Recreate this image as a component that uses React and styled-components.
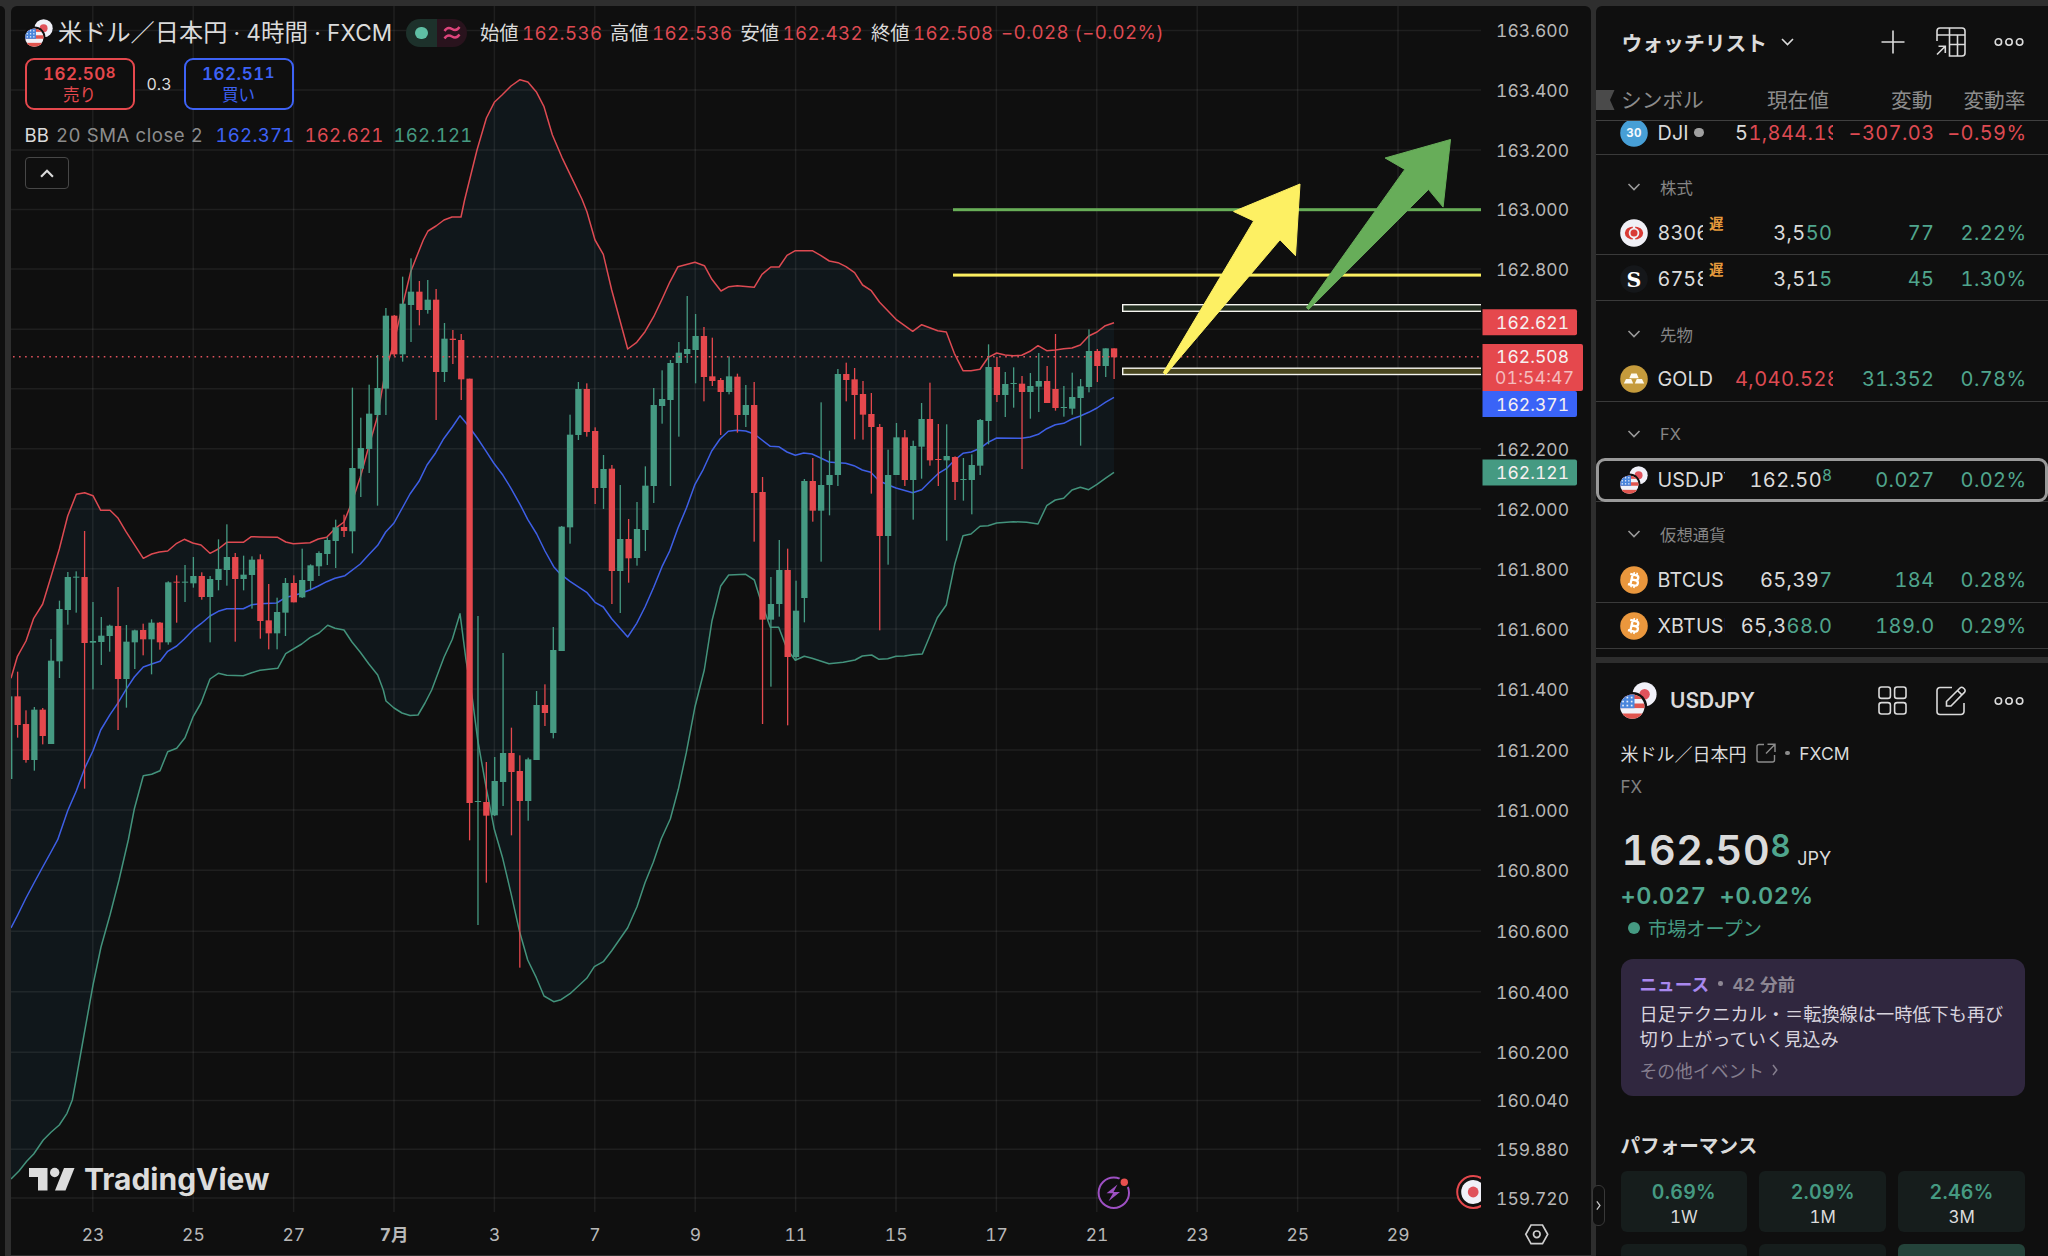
import React from 'react';
import styled, { createGlobalStyle, css } from 'styled-components';

const c = {
  frame: '#2e2e2e',
  panel: '#0f0f0f',
  text: '#dbdbdb',
  muted: '#8c8c8c',
  axis: '#b8b8b8',
  line: '#333333',
  red: '#e5484d',
  redText: '#dd4a52',
  green: '#459a82',
  greenText: '#4fa58d',
  blue: '#3d62f5',
};

const Global = createGlobalStyle`
  *, *::before, *::after { box-sizing: border-box; }
  html, body { margin: 0; padding: 0; background: ${c.frame}; }
  body {
    width: 2048px;
    height: 1256px;
    overflow: hidden;
    font-family: Inter, 'Noto Sans CJK JP', sans-serif;
    font-variant-numeric: tabular-nums;
    color: ${c.text};
  }
`;

/* ---------- chart data ---------- */

const STEP = 8.37;
const ORIGIN = 93;

// Each row: colour, high, body top, body bottom, low (thirds of a pixel below `base`).
const candleBlocks = [
  { first: -10, base: 1320, rows: [
    ['g', 769, 769, 1017, 1017], ['r', 695, 769, 855, 893], ['r', 811, 852, 960, 968], ['g', 801, 809, 960, 992],
    ['r', 804, 809, 888, 913], ['g', 597, 662, 912, 912], ['g', 482, 507, 664, 714], ['g', 396, 411, 510, 554],
    ['g', 394, 410, 413, 518], ['r', 273, 411, 609, 1046], ['g', 486, 603, 608, 748], ['g', 531, 587, 606, 675],
    ['g', 554, 557, 588, 635], ['r', 441, 558, 717, 870], ['g', 555, 605, 717, 803], ['g', 569, 571, 607, 687],
    ['r', 551, 570, 598, 646], ['g', 538, 548, 598, 703], ['r', 546, 548, 607, 629], ['g', 424, 427, 607, 614],
    ['r', 406, 425, 428, 548], ['g', 375, 425, 428, 486], ['g', 351, 408, 430, 443], ['r', 397, 408, 471, 479],
    ['g', 408, 417, 471, 607], ['g', 298, 387, 420, 451], ['g', 253, 351, 390, 437], ['r', 339, 351, 417, 605],
    ['g', 347, 404, 417, 451], ['g', 349, 359, 405, 506], ['r', 343, 358, 543, 596], ['r', 432, 541, 580, 628],
    ['g', 473, 516, 580, 628], ['g', 414, 429, 518, 588], ['r', 406, 429, 487, 487], ['g', 326, 420, 472, 474],
    ['g', 373, 376, 423, 448], ['g', 334, 339, 379, 408], ['g', 292, 300, 342, 375], ['g', 239, 262, 303, 384],
    ['r', 224, 261, 273, 291],
  ] },
  { first: 31, base: 720, rows: [
    ['g', 443, 684, 874, 940], ['g', 533, 624, 686, 771], ['g', 434, 521, 627, 699], ['g', 345, 444, 525, 797],
    ['g', 204, 227, 446, 525], ['r', 225, 227, 343, 348], ['g', 110, 191, 343, 365], ['g', 55, 155, 195, 306],
    ['r', 123, 155, 210, 256], ['g', 120, 179, 210, 221], ['r', 147, 179, 396, 540], ['g', 249, 296, 396, 426],
    ['r', 270, 296, 300, 372], ['r', 282, 300, 418, 480], ['r', 416, 416, 1689, 1801],
  ] },
  { first: 46, base: 1740, rows: [
    ['g', 108, 663, 666, 1035], ['r', 546, 666, 707, 908], ['g', 531, 603, 706, 708], ['g', 219, 519, 606, 678],
    ['r', 443, 519, 576, 766], ['r', 526, 573, 663, 1163], ['g', 533, 538, 663, 722], ['g', 333, 375, 540, 540],
    ['r', 313, 375, 399, 438], ['g', 141, 210, 459, 475],
  ] },
  { first: 56, base: 720, rows: [
    ['g', 858, 860, 1233, 1233], ['g', 524, 584, 862, 911], ['g', 426, 447, 585, 600], ['r', 430, 447, 576, 590],
    ['r', 562, 573, 744, 792], ['g', 645, 687, 744, 807], ['r', 675, 686, 993, 1092], ['g', 735, 897, 993, 1119],
    ['r', 837, 897, 955, 1028], ['g', 786, 867, 954, 977], ['g', 679, 737, 870, 933], ['g', 444, 495, 738, 789],
    ['g', 391, 477, 498, 551], ['g', 360, 369, 480, 738],
  ] },
  { first: 70, base: 840, rows: [
    ['g', 186, 218, 249, 470], ['g', 48, 207, 222, 249], ['g', 102, 168, 210, 310], ['r', 141, 168, 291, 364],
    ['r', 173, 289, 303, 318], ['r', 294, 300, 336, 465], ['g', 229, 289, 336, 343], ['r', 281, 290, 405, 458],
    ['g', 315, 375, 405, 441], ['r', 306, 375, 639, 785], ['r', 591, 636, 1019, 1332], ['g', 891, 972, 1019, 1220],
    ['g', 780, 870, 972, 1010], ['r', 806, 870, 1131, 1336], ['g', 902, 992, 1131, 1140], ['g', 597, 603, 954, 1027],
    ['r', 534, 603, 692, 725], ['g', 367, 615, 692, 845], ['g', 512, 585, 615, 706], ['g', 267, 282, 585, 618],
    ['r', 248, 282, 300, 364], ['r', 264, 298, 345, 478], ['r', 303, 342, 404, 479], ['r', 339, 402, 441, 641],
    ['r', 432, 441, 768, 1051], ['g', 509, 585, 768, 854], ['g', 429, 472, 585, 585], ['r', 450, 472, 600, 618],
    ['g', 482, 498, 600, 719], ['g', 369, 417, 500, 596], ['r', 308, 417, 541, 557], ['r', 432, 537, 540, 618],
    ['g', 433, 528, 541, 782], ['r', 529, 531, 606, 660], ['g', 534, 597, 600, 662], ['g', 523, 555, 600, 703],
    ['g', 417, 420, 557, 585], ['g', 193, 261, 423, 493], ['r', 231, 261, 345, 366], ['g', 276, 312, 345, 411],
    ['g', 262, 309, 312, 383], ['r', 288, 311, 336, 567], ['g', 279, 318, 336, 416], ['g', 219, 303, 320, 396],
    ['r', 258, 303, 369, 369], ['r', 162, 327, 384, 392], ['g', 318, 381, 384, 410], ['g', 278, 351, 386, 404],
    ['g', 297, 319, 354, 497], ['g', 148, 213, 321, 337], ['r', 207, 213, 258, 306], ['g', 205, 205, 258, 291],
    ['r', 205, 205, 232, 297],
  ] },
];

const candles = candleBlocks.flatMap(({ first, base, rows }) =>
  rows.map(([kind, ...v], i) => ({
    kind,
    x: ORIGIN + (first + i) * STEP,
    v: v.map((n) => (n + base) / 3),
  })),
);

// A stretch of a band line: offset in pixels, divisor per unit, flat list of x,y pairs.
const stretch = (dx, dy, unit, list) => {
  const out = [];
  for (let i = 0; i < list.length; i += 2) out.push([dx + list[i] / unit, dy + list[i + 1] / unit]);
  return out;
};

const upper = [
  ...stretch(0, 440, 3, [33, 715, 52, 650, 78, 603, 101, 535, 128, 492, 153, 410, 178, 327, 203, 228, 229, 163, 254, 158,
    279, 167, 302, 211, 330, 211, 353, 233, 378, 275, 430, 355, 455, 342, 478, 336, 503, 333, 530, 310, 553, 298, 578, 309,
    603, 315, 630, 340, 655, 327, 680, 307, 730, 307, 754, 290, 780, 291, 833, 292, 857, 306, 880, 311, 930, 308, 955, 297,
    980, 292, 1005, 266, 1032, 246]),
  ...stretch(330, 240, 3, [66, 786, 91, 712, 116, 620, 141, 535, 166, 395, 191, 310, 217, 200, 242, 95, 267, 32, 280, 0]),
  ...stretch(0, 0, 1, [428, 231, 436, 226, 444, 220, 452, 217, 461, 217, 464.6, 200, 477, 150, 486.4, 118, 494.3, 102.3,
    502, 95, 511, 86, 520, 79.7, 527.9, 82, 536.6, 92.3, 544, 106.7, 552.4, 135, 561.9, 157.3, 572, 178.3, 582, 199.3,
    587, 212, 595, 240, 603.3, 254.3, 611.7, 290, 627.7, 349, 636.7, 342.3, 645, 331.7, 653.7, 316.7, 662, 299.3,
    669.7, 282.3, 678, 266.7, 694.9, 262.3, 704.4, 265.7, 711.9, 279.3, 721, 291, 728.9, 286.7, 737.2, 285.7, 754.2, 287.3,
    762, 274.3, 770.8, 267, 779.1, 267, 787, 255.3, 795.3, 250.7, 812.3, 250.7, 820.6, 255.3, 829.3, 261, 838, 262.7,
    846, 266.7, 854.6, 272.7, 862.6, 285, 871.3, 290.7, 879.6, 302.3]),
  ...stretch(660, 280, 3, [708, 118, 758, 154, 785, 134, 833, 152, 859, 156, 883, 220, 909, 272, 933, 272, 960, 268,
    985, 232, 1010, 219, 1035, 225, 1060, 227, 1085, 226, 1110, 214, 1134, 197, 1160, 212, 1186, 210, 1211, 206, 1236, 204,
    1261, 195, 1286, 168, 1311, 156, 1336, 137, 1362, 128]),
];

const basis = [
  ...stretch(0, 0, 1, [11, 928, 17.7, 915, 26, 898, 34, 883, 42.7, 867, 51, 852]),
  ...stretch(0, 440, 3, [173, 1199, 203, 1112, 229, 1053, 254, 985, 279, 932, 302, 870, 330, 824, 353, 790, 380, 745,
    403, 711, 430, 681, 455, 672, 480, 664, 503, 634, 530, 618, 553, 597, 580, 569, 603, 551, 630, 528, 655, 514, 680, 506,
    730, 506, 755, 494, 780, 491, 830, 489, 857, 472, 880, 467, 905, 459, 930, 450, 955, 438, 980, 425, 1005, 415]),
  ...stretch(330, 240, 3, [45, 1007, 91, 972, 116, 944, 143, 916, 167, 876, 192, 849, 217, 804, 240, 762, 267, 724,
    291, 675, 317, 638, 341, 596, 367, 561, 390, 527, 413, 555, 442, 594, 467, 632, 491, 669, 519, 706, 543, 745, 570, 793,
    593, 838, 620, 882, 645, 933, 671, 980, 690, 1001, 720, 1024, 770, 1057, 795, 1087, 820, 1101, 845, 1136, 893, 1191,
    920, 1150, 945, 1101, 971, 1042, 996, 980, 1019, 933]),
  ...stretch(660, 280, 3, [54, 744, 80, 682, 105, 613, 130, 568, 155, 513, 180, 477, 205, 454, 230, 451, 257, 453,
    283, 462, 306, 480, 331, 499, 356, 500, 381, 516, 406, 526, 431, 519, 456, 522, 482, 534, 507, 546, 532, 548, 557, 550,
    582, 557, 607, 570, 632, 577, 657, 602, 683, 614, 708, 624, 758, 638, 785, 629, 809, 605, 834, 581, 859, 566, 884, 540,
    909, 520, 934, 516, 960, 505, 984, 487, 1010, 474, 1085, 475, 1110, 471, 1135, 463, 1160, 446, 1186, 434, 1211, 430,
    1236, 417, 1261, 408, 1286, 397, 1311, 384, 1336, 367, 1362, 352]),
];

const lower = [
  ...stretch(0, 1100, 3, [33, 237, 57, 213, 80, 184, 101, 162, 130, 120, 153, 97, 178, 75, 201, 40, 217, 0]),
  ...stretch(0, 0, 1, [76, 1080, 84, 1035, 93, 985, 101, 947, 110, 915, 119, 880]),
  ...stretch(0, 440, 3, [385, 1200, 403, 1107, 430, 1007, 455, 1003, 480, 992, 503, 935, 530, 925, 555, 893, 580, 829,
    603, 789, 630, 717, 655, 700, 680, 706, 730, 707, 755, 698, 780, 691, 833, 685, 857, 641, 905, 612, 930, 593, 957, 579,
    983, 556, 1005, 565, 1032, 570]),
  ...stretch(330, 240, 3, [66, 1206, 91, 1237, 116, 1271, 143, 1305, 160, 1350]),
  ...stretch(0, 0, 1, [386, 701, 394, 708, 402, 713, 410, 715.5, 418, 715, 425, 703, 431.7, 690]),
  ...stretch(330, 240, 3, [342, 1252, 367, 1198, 390, 1121]),
  ...stretch(440, 580, 3, [78, 240, 97, 355, 113, 480, 138, 620, 163, 748, 188, 835, 213, 940, 238, 1052, 263, 1140,
    289, 1193, 312, 1248, 341, 1265, 363, 1259, 390, 1241, 440, 1195, 463, 1160, 490, 1145, 515, 1112, 563, 1043, 591, 980,
    615, 908, 640, 847, 664, 776, 691, 717, 715, 628, 739, 518, 765, 380, 793, 270]),
  ...stretch(660, 280, 3, [156, 1022, 182, 918, 206, 885, 257, 883, 283, 900, 300, 955, 331, 1042, 356, 1042, 381, 1107,
    406, 1141, 433, 1129, 456, 1135, 507, 1151, 550, 1147, 585, 1140, 607, 1128, 635, 1125, 657, 1138, 683, 1136, 708, 1129,
    733, 1128, 758, 1124, 787, 1122, 809, 1069, 832, 1013, 859, 975, 884, 853, 909, 767, 933, 762, 960, 739, 984, 737,
    1010, 729, 1060, 725, 1100, 727, 1134, 732, 1160, 677, 1186, 660, 1211, 655, 1236, 630, 1261, 622, 1286, 629, 1311, 613,
    1336, 595, 1362, 577]),
];

const toPoints = (list) => list.map(([x, y]) => `${x.toFixed(1)},${y.toFixed(1)}`).join(' ');

const priceTicks = [
  ['163.600', 30.5], ['163.400', 90], ['163.200', 150], ['163.000', 209.5], ['162.800', 269], ['', 329.3], ['', 388.7],
  ['162.200', 448.7], ['162.000', 509], ['161.800', 568.7], ['161.600', 629], ['161.400', 689], ['161.200', 750],
  ['161.000', 810], ['160.800', 870.3], ['160.600', 931.3], ['160.400', 991.7], ['160.200', 1052.3], ['160.040', 1100.5],
  ['159.880', 1149.3], ['159.720', 1198],
];
const timeTicks = ['23', '25', '27', '7月', '3', '7', '9', '11', '15', '17', '21', '23', '25', '29'];

/* ---------- layout ---------- */

const Shell = styled.div`
  display: grid;
  grid-template-columns: 5px 1580px 452px;
  column-gap: 5.5px;
  width: 2048px;
  height: 1256px;
  padding-top: 6px;
  overflow: hidden;
  background: ${c.frame};
`;

const ToolEdge = styled.div`
  background: ${c.panel};
  border-top-right-radius: 6px;
`;

const ChartPanel = styled.main`
  position: relative;
  height: 1249px;
  margin-left: 0.5px;
  background: ${c.panel};
  border-radius: 6px 6px 0 0;
  overflow: hidden;
`;

const ChartSvg = styled.svg`
  display: block;
  width: 1580px;
  height: 1249px;
`;

const AxisText = styled.text`
  font-family: Inter, 'Noto Sans CJK JP', sans-serif;
  font-size: 17.5px;
  font-weight: ${(p) => (p.$bold ? 700 : 400)};
  fill: ${(p) => p.$fill || c.axis};
`;

const LogoText = styled.text`
  font-family: Inter, sans-serif;
  font-size: 30px;
  font-weight: 700;
  fill: #dcdcdc;
`;

const Legend = styled.div`
  position: absolute;
  left: 13.5px;
  top: 12px;
  display: flex;
  flex-direction: column;
  align-items: flex-start;
`;

const LegendRow = styled.div`
  display: flex;
  align-items: center;
  height: ${(p) => p.$h}px;
  margin-bottom: ${(p) => p.$mb || 0}px;
  white-space: pre;
`;

const PairTitle = styled.span`
  margin-left: 5.5px;
  width: 337px;
  font-size: 22.6px;
  line-height: 30px;
  letter-spacing: 0.1px;
`;

const Cjk = styled.span`
  font-size: ${(p) => p.$size}px;
  letter-spacing: 0;
`;

const StatusPill = styled.span`
  display: flex;
  width: 61px;
  height: 28px;
  margin: 0 13px 0 11px;
  border-radius: 14px;
  overflow: hidden;
`;

const PillHalf = styled.span`
  flex: 1;
  display: flex;
  align-items: center;
  justify-content: center;
  background: ${(p) => p.$bg};
`;

const Dot = styled.span`
  flex: none;
  width: ${(p) => p.$size}px;
  height: ${(p) => p.$size}px;
  border-radius: 50%;
  background: ${(p) => p.$color};
`;

const Ohlc = styled.span`
  width: ${(p) => p.$w}px;
  font-size: 18.7px;
  line-height: 28px;
  letter-spacing: 0.4px;
  color: ${c.redText};
`;

const OhlcLabel = styled.span`
  display: inline-block;
  width: 42px;
  font-size: 19.3px;
  letter-spacing: 0;
  color: ${c.text};
`;

const TradeButton = styled.button`
  display: flex;
  flex-direction: column;
  align-items: center;
  justify-content: center;
  width: 110px;
  height: 52px;
  padding: 1px 0 0;
  border: 2px solid ${(p) => p.$color};
  border-radius: 9px;
  background: ${c.panel};
  color: ${(p) => p.$color};
  font: 600 17px/21px Inter, 'Noto Sans CJK JP', sans-serif;
  font-variant-numeric: tabular-nums;
`;

const TradePrice = styled.span`
  letter-spacing: 0.5px;
`;

const TradeLabel = styled.span`
  font-size: 16.5px;
  line-height: 20px;
  font-weight: 400;
`;

const Sup = styled.span`
  position: relative;
  top: ${(p) => p.$up}px;
  font-size: ${(p) => p.$size}px;
  color: ${(p) => p.$color || 'inherit'};
`;

const Spread = styled.span`
  width: 49px;
  text-align: center;
  font-size: 16px;
`;

const StudyPart = styled.span`
  width: ${(p) => p.$w}px;
  font-size: 18.6px;
  letter-spacing: ${(p) => p.$ls ?? 0.25}px;
  color: ${(p) => p.$color};
`;

const CollapseButton = styled.button`
  display: flex;
  align-items: center;
  justify-content: center;
  width: 44px;
  height: 32px;
  padding: 0;
  border: 1.5px solid #474747;
  border-radius: 4px;
  background: ${c.panel};
`;

/* ---------- sidebar ---------- */

const Sidebar = styled.aside`
  position: relative;
  display: flex;
  flex-direction: column;
  gap: 6px;
  height: 1250px;
  min-width: 0;
`;

const Panel = styled.section`
  height: ${(p) => p.$h}px;
  background: ${c.panel};
  border-top-left-radius: ${(p) => p.$radius || 0}px;
  overflow: hidden;
`;

const PanelHeader = styled.header`
  display: flex;
  align-items: center;
  justify-content: space-between;
  height: ${(p) => p.$h}px;
  padding: 0 24px 0 ${(p) => p.$pl}px;
`;

const HeaderTitle = styled.h2`
  display: flex;
  align-items: center;
  gap: ${(p) => p.$gap}px;
  margin: 0;
  font-size: ${(p) => p.$size}px;
  font-weight: 600;
`;

const HeaderTools = styled.div`
  display: flex;
  align-items: center;
  gap: 28px;

  & > :first-child { margin-right: ${(p) => p.$lead}px; }
`;

const gridColumns = css`
  display: grid;
  grid-template-columns: 103px 105px 103.500px 93px;
  padding-left: 25px;
`;

const ColumnHeads = styled.div`
  ${gridColumns}
  position: relative;
  height: 43px;
  align-items: center;
  padding-bottom: 1px;
  border-bottom: 1.5px solid #404040;
  font-size: 20.7px;
  color: ${c.muted};
  text-align: right;

  & > :first-child { text-align: left; }
`;

const FlagMark = styled.svg`
  position: absolute;
  left: 0;
  top: 12px;
`;

const List = styled.div`
  height: 536px;
  overflow: hidden;
`;

const ListInner = styled.div`
  margin-top: -12px;
`;

const Group = styled.div`
  display: flex;
  align-items: center;
  gap: 19px;
  height: 54.4px;
  padding: 10px 0 0 31px;
  font-size: 16.4px;
  color: #858585;
`;

const Row = styled.div`
  position: relative;
  display: grid;
  grid-template-columns: 28px 67px 118px 101.500px 92px;
  align-items: center;
  height: 46px;
  padding: 2px 0 0 24px;
  border-bottom: 1px solid #3a3a3a;
  font-size: 20px;
  letter-spacing: 0.4px;
  text-align: right;

  ${(p) =>
    p.$selected &&
    css`
      &::after {
        content: '';
        position: absolute;
        inset: 2px 0 -1px;
        border: 3px solid #9a9a9a;
        border-radius: 9px;
      }
    `}
`;

const SymbolCell = styled.span`
  display: flex;
  align-items: center;
  padding-left: 9.5px;
  text-align: left;
`;

const SymbolName = styled.span`
  flex: none;
  width: ${(p) => p.$w}px;
  overflow: hidden;
  white-space: nowrap;
  font-size: 19.8px;
  letter-spacing: 0.1px;
`;

const DelayBadge = styled.span`
  align-self: flex-start;
  margin: -7px 0 0 6px;
  font-size: 14.5px;
  line-height: 20px;
  font-weight: 700;
  letter-spacing: 0;
  color: #e59a3c;
`;

const LastPrice = styled.span`
  display: flex;
  justify-content: ${(p) => (p.$clip ? 'flex-start' : 'flex-end')};
  width: ${(p) => (p.$clip ? 98 : 97)}px;
  margin-left: ${(p) => (p.$clip ? 20 : 20.5)}px;
  overflow: hidden;
  white-space: nowrap;
`;

const Tint = styled.span`
  color: ${(p) => p.$color};
`;

const Details = styled.div`
  display: flex;
  flex-direction: column;
  padding: 0 23px 0 24.5px;
`;

const NameLine = styled.div`
  display: flex;
  align-items: center;
  height: 30px;
  font-size: 17.5px;
`;

const Kind = styled.div`
  height: 36px;
  line-height: 38px;
  font-size: 17px;
  color: #808080;
`;

const Quote = styled.div`
  display: flex;
  align-items: baseline;
  height: 56px;
  margin-top: 18px;
  padding-left: 1px;
  font-size: 41.3px;
  line-height: 56px;
  font-weight: 600;
  letter-spacing: 0.7px;
`;

const Currency = styled.span`
  margin-left: 6px;
  font-size: 18px;
  font-weight: 400;
  letter-spacing: 0;
`;

const ChangeLine = styled.div`
  display: flex;
  gap: 13px;
  height: 30px;
  margin-top: 3px;
  font-size: 23.5px;
  line-height: 30px;
  font-weight: 600;
  letter-spacing: 0.6px;
  color: ${c.greenText};
`;

const MarketState = styled.div`
  display: flex;
  align-items: center;
  gap: 8px;
  height: 30px;
  margin-top: 2px;
  padding-left: 7px;
  font-size: 19.2px;
  color: ${c.green};
`;

const NewsCard = styled.article`
  height: 137px;
  margin-top: 16px;
  padding: 11px 18px 0 19px;
  border-radius: 12px;
  background: #30273f;
`;

const NewsMeta = styled.div`
  display: flex;
  align-items: center;
  height: 27px;
  font-size: 17.6px;
  font-weight: 600;
  color: #8d8793;
`;

const NewsTitle = styled.p`
  margin: 4.5px 0 0;
  font-size: 18.2px;
  line-height: 25px;
  white-space: nowrap;
  color: #d8d4de;
`;

const NewsMore = styled.div`
  display: flex;
  align-items: center;
  gap: 8px;
  height: 30px;
  margin-top: 3.5px;
  font-size: 17.8px;
  color: #857e8e;
`;

const SectionTitle = styled.h3`
  height: 30px;
  margin: 35px 0 0;
  font-size: 19.6px;
  line-height: 30px;
  font-weight: 700;
`;

const Tiles = styled.div`
  display: grid;
  grid-template-columns: repeat(3, 1fr);
  gap: 12px;
  margin-top: 10px;
`;

const Tile = styled.div`
  display: flex;
  flex-direction: column;
  align-items: center;
  height: 61px;
  padding-top: 8px;
  border-radius: 6px;
  background: ${(p) => p.$bg};
  font-size: 17px;
  line-height: 24px;
`;

const TileValue = styled.span`
  font-size: 19.5px;
  line-height: 26px;
  font-weight: 600;
  letter-spacing: 0.3px;
  color: ${c.green};
`;

const HideTab = styled.div`
  position: absolute;
  left: -4px;
  top: 1178.5px;
  display: flex;
  align-items: center;
  justify-content: center;
  width: 13px;
  height: 41px;
  border: 1px solid #383838;
  border-radius: 6px;
  background: ${c.panel};
`;

/* ---------- icons ---------- */

const Pair = ({ size }) => (
  <svg width={size} height={size} viewBox="0 0 37 37">
    <circle cx="24.6" cy="12.2" r="12" fill="#f0f0f8" />
    <circle cx="24.6" cy="12.2" r="5.2" fill="#e0525c" />
    <circle cx="12.5" cy="24.5" r="14.6" fill={c.panel} />
    <clipPath id={`us${size}`}>
      <circle cx="12.3" cy="24.6" r="12.2" />
    </clipPath>
    <g clipPath={`url(#us${size})`}>
      <rect y="12" width="25" height="25" fill="#f2f2f8" />
      <rect y="12" width="25" height="5" fill="#e0554f" />
      <rect y="21.5" width="25" height="4.6" fill="#e0554f" />
      <rect y="31.5" width="25" height="6" fill="#e0554f" />
      <rect y="12" width="14.5" height="14.2" fill="#4a86dc" />
      {[15.5, 19.5, 23.5].map((y) => [3, 7.3, 11.6].map((x) => (
        <rect key={`${x}-${y}`} x={x - 0.8} y={y - 0.8} width="1.7" height="1.7" fill="#e8effb" />
      )))}
    </g>
  </svg>
);

const Chevron = ({ w = 13, h = 8, color = '#dbdbdb', up, sw = 1.6 }) => (
  <svg width={w} height={h} viewBox="0 0 13 8" fill="none" stroke={color} strokeWidth={sw}>
    <path d={up ? 'M1 7 6.5 1.5 12 7' : 'M1 1 6.5 6.5 12 1'} />
  </svg>
);

const RightChevron = ({ color, w = 6, h = 12 }) => (
  <svg width={w} height={h} viewBox="0 0 6 12" fill="none" stroke={color} strokeWidth="1.5">
    <path d="M1 1 4.8 6 1 11" />
  </svg>
);

const Dots = () => (
  <svg width="30" height="10" viewBox="0 0 30 10" fill="none" stroke="#dbdbdb" strokeWidth="1.6">
    <circle cx="4.4" cy="5" r="3.2" />
    <circle cx="15" cy="5" r="3.2" />
    <circle cx="25.6" cy="5" r="3.2" />
  </svg>
);

const Plus = () => (
  <svg width="24" height="24" viewBox="0 0 24 24" stroke="#dbdbdb" strokeWidth="1.6">
    <path d="M12 0.5v23M0.5 12h23" />
  </svg>
);

const TableIcon = () => (
  <svg width="30" height="30" viewBox="0 0 30 30" fill="none" stroke="#dbdbdb" strokeWidth="1.6">
    <path d="M1 14V4a3 3 0 0 1 3-3h22a3 3 0 0 1 3 3v22a3 3 0 0 1-3 3H13.5V1" />
    <path d="M1 8h28M13.5 17.5H29M21.5 8v21" />
    <path d="M1 27.5 9 19.5M2.5 19.2h6.8v6.8" />
  </svg>
);

const GridIcon = () => (
  <svg width="29" height="29" viewBox="0 0 29 29" fill="none" stroke="#dbdbdb" strokeWidth="1.6">
    <rect x="1" y="1" width="11.4" height="11.4" rx="2.5" />
    <rect x="16.6" y="1" width="11.4" height="11.4" rx="2.5" />
    <rect x="1" y="16.6" width="11.4" height="11.4" rx="2.5" />
    <rect x="16.6" y="16.6" width="11.4" height="11.4" rx="2.5" />
  </svg>
);

const EditIcon = () => (
  <svg width="30" height="30" viewBox="0 0 30 30" fill="none" stroke="#dbdbdb" strokeWidth="1.6">
    <path d="M16 1.5H4A3 3 0 0 0 1 4.500V25.500a3 3 0 0 0 3 3h21a3 3 0 0 0 3-3V17" />
    <path d="M10.500 15.500 24 2a2.400 2.400 0 0 1 3.400 0l1 1a2.400 2.400 0 0 1 0 3.400L15 20h-4.500zM21.500 4.500l4.400 4.400" />
  </svg>
);

const LinkIcon = () => (
  <svg width="20" height="20" viewBox="0 0 20 20" fill="none" stroke="#8c8c8c" strokeWidth="1.4">
    <path d="M8 1.500H3A2 2 0 0 0 1 3.500V17a2 2 0 0 0 2 2h13.500a2 2 0 0 0 2-2v-5M11.500 1.200H19V9M18.800 1.400 10 10.500" />
  </svg>
);

const DowIcon = () => (
  <svg width="28" height="28" viewBox="0 0 28 28">
    <circle cx="14" cy="14" r="13.8" fill="#479fd6" />
    <text x="14" y="18.300" textAnchor="middle" fontFamily="Inter" fontWeight="700" fontSize="11.500" fill="#f2f8fd">30</text>
  </svg>
);

const MufgIcon = () => (
  <svg width="28" height="28" viewBox="0 0 28 28">
    <circle cx="14" cy="14" r="13.8" fill="#f0f0f6" />
    <ellipse cx="14" cy="14" rx="9.200" ry="6.600" fill="#d93a35" />
    <circle cx="14" cy="14" r="5.300" fill="#f0f0f6" />
    <path d="M12.800 7h2.400v2.500h-2.400zM12.800 18.500h2.400V21h-2.400z" fill="#f0f0f6" />
    <circle cx="14" cy="14" r="3.500" fill="#d93a35" />
  </svg>
);

const SonyIcon = () => (
  <svg width="28" height="28" viewBox="0 0 28 28">
    <circle cx="14" cy="14" r="13.800" fill="#15171a" />
    <text x="14" y="21.500" textAnchor="middle" fontFamily="'DejaVu Serif', serif" fontWeight="700" fontSize="20.500" fill="#fff">S</text>
  </svg>
);

const GoldIcon = () => (
  <svg width="28" height="28" viewBox="0 0 28 28">
    <circle cx="14" cy="14" r="13.800" fill="#c59b3c" />
    <path d="M11.300 8.500h5.400l2 4.800H9.300zM6 13.900h5.200l2 4.600H3.800zM16.800 13.900H22l2.200 4.600h-9.400z" fill="#fdf9ee" />
  </svg>
);

const BtcIcon = () => (
  <svg width="28" height="28" viewBox="0 0 28 28" fill="none">
    <circle cx="14" cy="14" r="13.800" fill="#ea973d" />
    <g transform="rotate(13 14 14)" stroke="#fff" strokeWidth="2.300">
      <path d="M11.500 8.800v10.500M9 8.900h6.200a2.500 2.500 0 0 1 0 5H11.500M11.500 13.900h4.300a2.700 2.700 0 0 1 0 5.400H9" />
      <path d="M12.600 6.200v2.500M15.600 6.200v2.500M12.600 19.300v2.500M15.600 19.300v2.500" strokeWidth="1.600" />
    </g>
  </svg>
);

/* ---------- chart ---------- */

// Tapered arrow from a thin tail to a barbed head, symmetric about its axis.
const MarkerArrow = ({ from, to, head, neck, fill }) => {
  const dx = to[0] - from[0];
  const dy = to[1] - from[1];
  const len = Math.hypot(dx, dy);
  const ux = dx / len;
  const uy = dy / len;
  const at = (along, side) => [from[0] + ux * along - uy * side, from[1] + uy * along + ux * side];
  const half = neck * 0.092;
  const outline = [
    at(0, -1.500), at(neck, -half), at(head, -38), at(len, 0), at(head, 38), at(neck, half), at(0, 1.500),
  ];
  return <polygon points={toPoints(outline)} fill={fill} stroke={fill} strokeLinejoin="round" />;
};

const Tag = ({ y, h, w = 94.5, fill, children, ty }) => (
  <g>
    <path d={`M1482.500 ${y}h${w - 2}a2 2 0 0 1 2 2v${h - 4}a2 2 0 0 1 -2 2h-${w - 2}z`} fill={fill} />
    <AxisText x="1496" y={ty} textLength="73" $fill="#f7f0f0">{children}</AxisText>
  </g>
);

const Chart = () => (
  <ChartSvg viewBox="11 6 1580 1249">
    <defs>
      <clipPath id="plot"><rect x="11" y="6" width="1470" height="1249" /></clipPath>
    </defs>
    <g clipPath="url(#plot)">
      <polygon points={toPoints([...upper, ...[...lower].reverse()])} fill="#10171b" />
      <g stroke="#f2f2f2" strokeOpacity="0.075" strokeWidth="1.500">
        {priceTicks.map(([, y]) => <line key={y} x1="11" x2="1481" y1={y} y2={y} />)}
        {timeTicks.map((_, i) => {
          const x = ORIGIN + i * 100.4 - 0.2;
          return <line key={x} x1={x} x2={x} y1="6" y2="1212" />;
        })}
      </g>
      <g fill="none" strokeWidth="1.500" strokeLinejoin="round">
        <polyline points={toPoints(basis)} stroke="#3e5fe6" />
        <polyline points={toPoints(upper)} stroke="#dd4a52" />
        <polyline points={toPoints(lower)} stroke="#43937c" />
      </g>
      {candles.map(({ kind, x, v }) => (
        <g key={x} fill={kind === 'g' ? c.green : c.red}>
          <rect x={x - 0.700} y={v[0]} width="1.300" height={v[3] - v[0]} />
          <rect x={x - 3.200} y={v[1]} width="6.300" height={Math.max(1, v[2] - v[1])} />
        </g>
      ))}
      <line x1="13" x2="1481" y1="356.700" y2="356.700" stroke="#e0525c" strokeWidth="1.500" strokeDasharray="1.600 4.450" />
      <rect x="1122.700" y="304.700" width="370" height="6.600" fill="#232e20" stroke="#f5f5f0" strokeWidth="1.400" />
      <rect x="1122.700" y="368.200" width="370" height="6.300" fill="#49461f" stroke="#f5f5f0" strokeWidth="1.400" />
      <rect x="953" y="208.200" width="528" height="3" fill="#68ae58" />
      <rect x="953" y="273.600" width="528" height="3" fill="#fbee60" />
      <MarkerArrow from={[1307.500, 308.500]} to={[1450.500, 139.500]} head={165} neck={169} fill="#67ad59" />
      <MarkerArrow from={[1164.500, 373.500]} to={[1300, 184]} head={172} neck={176} fill="#fdf063" />
      <circle cx="1473.200" cy="1192" r="16" fill={c.panel} stroke={c.red} strokeWidth="2" />
      <circle cx="1473.200" cy="1192" r="12" fill="#f0f0f8" />
      <circle cx="1473.200" cy="1192" r="5.400" fill="#e0525c" />
    </g>

    <circle cx="1113.800" cy="1192.700" r="15.200" fill={c.panel} stroke="#9d50c2" strokeWidth="2" />
    <circle cx="1124.300" cy="1182.300" r="6" fill={c.panel} />
    <circle cx="1124.300" cy="1182.300" r="3.700" fill="#e8504f" />
    <path d="M1117.500 1184.500 1106.500 1193.200h6.500l-4.500 8 11.500-9.200h-6.500z" fill="#9d50c2" />

    <g fill="#dcdcdc">
      <path d="M29 1168h18.500v22.500h-9.500v-13.500H29z" />
      <circle cx="54.700" cy="1172.500" r="4.700" />
      <path d="M64 1168h10.500L65.500 1190.500H55z" />
    </g>
    <LogoText x="84" y="1190.300" textLength="185.500">TradingView</LogoText>

    {priceTicks.map(([label, y]) => label && (
      <AxisText key={y} x="1496" y={y + 6.900} textLength="73">{label}</AxisText>
    ))}
    {timeTicks.map((label, i) => (
      <AxisText key={i} x={ORIGIN + i * 100.4} y="1241" textAnchor="middle" $bold={label === '7月'}>{label}</AxisText>
    ))}
    <Tag y={309.300} h={26} ty={328.500} fill={c.red}>162.621</Tag>
    <Tag y={391} h={26} ty={410.500} fill="#3a63f7">162.371</Tag>
    <Tag y={344} h={47} w={100.500} ty={363} fill={c.red}>162.508</Tag>
    <AxisText x="1495" y="384.300" textLength="79" $fill="#f4bcbe">01:54:47</AxisText>
    <Tag y={459.500} h={26} ty={479} fill={c.green}>162.121</Tag>

    <g fill="none" stroke="#cfcfcf" strokeWidth="1.700">
      <path d="M1531 1225h11.500l5.200 9.300-5.200 9.300H1531l-5.200-9.300z" />
      <circle cx="1536.800" cy="1234.300" r="3.300" />
    </g>
  </ChartSvg>
);

const ohlc = [['始値', '162.536', 130], ['高値', '162.536', 130.500], ['安値', '162.432', 130.500], ['終値', '162.508', 130]];

const ChartLegend = () => (
  <Legend>
    <LegendRow $h={30} $mb={10}>
      <Pair size={28} />
      <PairTitle>
        <Cjk $size={24.200}>米ドル／日本円</Cjk> · 4<Cjk $size={23.500}>時間</Cjk> · FXCM
      </PairTitle>
      <StatusPill>
        <PillHalf $bg="#1d312b"><Dot $size={12.500} $color="#5fbfa4" /></PillHalf>
        <PillHalf $bg="#29131d">
          <svg width="18" height="16" viewBox="0 0 18 16" fill="none" stroke="#dd447b" strokeWidth="2.400">
            <path d="M1.500 6C4 2 6.500 2.500 9 4s5 1.700 7.500-2M1.500 13.500C4 9.500 6.500 10 9 11.500s5 1.700 7.500-2" />
          </svg>
        </PillHalf>
      </StatusPill>
      {ohlc.map(([label, value, w]) => (
        <Ohlc key={label} $w={w}><OhlcLabel>{label}</OhlcLabel>{value}</Ohlc>
      ))}
      <Ohlc $w={170}>−0.028 (−0.02%)</Ohlc>
    </LegendRow>
    <LegendRow $h={52} $mb={10}>
      <TradeButton $color={c.red}>
        <TradePrice>162.50<Sup $up={-2.500} $size={15}>8</Sup></TradePrice>
        <TradeLabel>売り</TradeLabel>
      </TradeButton>
      <Spread>0.3</Spread>
      <TradeButton $color={c.blue}>
        <TradePrice>162.51<Sup $up={-2.500} $size={15}>1</Sup></TradePrice>
        <TradeLabel>買い</TradeLabel>
      </TradeButton>
    </LegendRow>
    <LegendRow $h={30} $mb={7}>
      <StudyPart $w={31.500} $color={c.text} $ls={0}>BB</StudyPart>
      <StudyPart $w={159.500} $color={c.muted} $ls={0.550}>20 SMA close 2</StudyPart>
      <StudyPart $w={89} $color={c.blue}>162.371</StudyPart>
      <StudyPart $w={89} $color={c.redText}>162.621</StudyPart>
      <StudyPart $w={89} $color={c.green}>162.121</StudyPart>
    </LegendRow>
    <CollapseButton><Chevron up w={14} h={9} sw={2} /></CollapseButton>
  </Legend>
);

/* ---------- watchlist ---------- */

const watchlist = [
  { icon: DowIcon, symbol: 'DJI', dot: true, clip: true, head: '5', tail: '1,844.19', change: '−307.03', pct: '−0.59%', down: true },
  { group: '株式' },
  { icon: MufgIcon, symbol: '8306', delayed: true, head: '3,5', tail: '50', change: '77', pct: '2.22%' },
  { icon: SonyIcon, symbol: '6758', delayed: true, head: '3,51', tail: '5', change: '45', pct: '1.30%' },
  { group: '先物' },
  { icon: GoldIcon, symbol: 'GOLD', clip: true, tail: '4,040.528', tailDown: true, change: '31.352', pct: '0.78%' },
  { group: 'FX' },
  { icon: () => <Pair size={28} />, symbol: 'USDJPY', head: '162.50', sup: '8', change: '0.027', pct: '0.02%', selected: true },
  { group: '仮想通貨' },
  { icon: BtcIcon, symbol: 'BTCUSD', head: '65,39', tail: '7', change: '184', pct: '0.28%' },
  { icon: BtcIcon, symbol: 'XBTUSD', head: '65,3', tail: '68.0', change: '189.0', pct: '0.29%' },
];

const WatchRow = ({ item }) => {
  const Icon = item.icon;
  const color = item.down ? c.redText : c.greenText;
  return (
    <Row $selected={item.selected}>
      <Icon />
      <SymbolCell>
        <SymbolName $w={item.delayed ? 45.500 : item.dot ? 36.500 : 67}>{item.symbol}</SymbolName>
        {item.dot && <Dot $size={9.500} $color="#a0a0a0" />}
        {item.delayed && <DelayBadge>遅</DelayBadge>}
      </SymbolCell>
      <LastPrice $clip={item.clip}>
        {item.head}
        {item.tail && <Tint $color={item.tailDown ? c.redText : color}>{item.tail}</Tint>}
        {item.sup && <Sup $up={-2} $size={15.500} $color={color}>{item.sup}</Sup>}
      </LastPrice>
      <Tint $color={color}>{item.change}</Tint>
      <Tint $color={color}>{item.pct}</Tint>
    </Row>
  );
};

const Watchlist = () => (
  <Panel $h={651} $radius={6}>
    <PanelHeader $h={72} $pl={25.500}>
      <HeaderTitle $size={20.800} $gap={14}>ウォッチリスト<Chevron /></HeaderTitle>
      <HeaderTools $lead={3}><Plus /><TableIcon /><Dots /></HeaderTools>
    </PanelHeader>
    <ColumnHeads>
      <span>シンボル</span><span>現在値</span><span>変動</span><span>変動率</span>
      <FlagMark width="19" height="20" viewBox="0 0 19 20"><path d="M0 0h18.500l-4.500 10 4.500 10H0z" fill="#4a4a4a" /></FlagMark>
    </ColumnHeads>
    <List>
      <ListInner>
        {watchlist.map((item) =>
          item.group
            ? <Group key={item.group}><Chevron color="#9a9a9a" w={14} h={8} /><span>{item.group}</span></Group>
            : <WatchRow key={item.symbol} item={item} />)}
      </ListInner>
    </List>
  </Panel>
);

const tiles = [
  ['0.69%', '1W'], ['2.09%', '1M'], ['2.46%', '3M'], [], [], ['', '', '#24433a'],
];

const SymbolDetails = () => (
  <Panel $h={593}>
    <PanelHeader $h={75} $pl={24}>
      <HeaderTitle $size={21} $gap={13}><Pair size={37} />USDJPY</HeaderTitle>
      <HeaderTools $lead={1}><GridIcon /><EditIcon /><Dots /></HeaderTools>
    </PanelHeader>
    <Details>
      <NameLine>
        <Cjk $size={18}>米ドル／日本円</Cjk>&nbsp;&nbsp;<LinkIcon />&nbsp;&nbsp;<Dot $size={4.500} $color="#8c8c8c" />&nbsp;&nbsp;FXCM
      </NameLine>
      <Kind>FX</Kind>
      <Quote>162.50<Sup $up={-8} $size={31} $color={c.greenText}>8</Sup><Currency>JPY</Currency></Quote>
      <ChangeLine><span>+0.027</span><span>+0.02%</span></ChangeLine>
      <MarketState><Dot $size={12.500} $color={c.green} />市場オープン</MarketState>
      <NewsCard>
        <NewsMeta><Tint $color="#a888ee">ニュース</Tint>&nbsp;&nbsp;<Dot $size={4.500} $color="#8d8793" />&nbsp;&nbsp;42 分前</NewsMeta>
        <NewsTitle>日足テクニカル・＝転換線は一時低下も再び<br />切り上がっていく見込み</NewsTitle>
        <NewsMore>その他イベント<RightChevron color="#857e8e" /></NewsMore>
      </NewsCard>
      <SectionTitle>パフォーマンス</SectionTitle>
      <Tiles>
        {tiles.map(([value, label, bg], i) => (
          <Tile key={i} $bg={bg || '#161d1c'}><TileValue>{value}</TileValue>{label}</Tile>
        ))}
      </Tiles>
    </Details>
  </Panel>
);

export default function App() {
  return (
    <>
      <Global />
      <Shell>
        <ToolEdge />
        <ChartPanel>
          <Chart />
          <ChartLegend />
        </ChartPanel>
        <Sidebar>
          <Watchlist />
          <SymbolDetails />
          <HideTab><RightChevron color="#c8c8c8" w={5} h={11} /></HideTab>
        </Sidebar>
      </Shell>
    </>
  );
}
